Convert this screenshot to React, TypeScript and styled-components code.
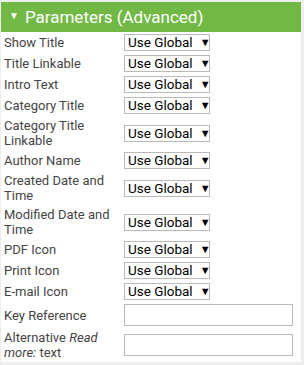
import styled, { createGlobalStyle } from "styled-components";

const GlobalStyle = createGlobalStyle`
  html, body {
    margin: 0;
    padding: 0;
    background: #eeeeee;
  }
  body {
    font-family: Roboto, "Liberation Sans", sans-serif;
  }
`;

const Page = styled.div`
  padding: 2px 3px 2px 1px;
  width: 304px;
  height: 365px;
  box-sizing: border-box;
`;

const Panel = styled.div`
  background: #fff;
`;

const Header = styled.div`
  display: flex;
  align-items: center;
  gap: 6px;
  height: 30px;
  padding-left: 8px;
  background: #71b844;
  color: #fff;
  font-size: 17px;
  line-height: 30px;
`;

const Caret = styled.span`
  font-size: 10px;
  line-height: 1;
  margin-top: -3px;
`;

const Table = styled.table`
  width: 100%;
  border-collapse: collapse;
  font-size: 13px;
  line-height: 15px;
`;

const Label = styled.td`
  width: 112px;
  padding: 2px 4px 2px 3px;
  color: #454545;
  vertical-align: middle;
`;

const Field = styled.td`
  padding: 2px 8px 2px 4px;
  vertical-align: middle;
`;

const SelectBox = styled.div`
  display: flex;
  align-items: center;
  gap: 7px;
  box-sizing: border-box;
  width: 86px;
  height: 17px;
  padding: 0 0 0 3px;
  border: 1px solid #b9b9b9;
  color: #000;
  font-size: 13.5px;
  line-height: 15px;
  white-space: nowrap;
  overflow: hidden;
`;

const Arrow = styled.span`
  font-size: 11px;
`;

const TextInput = styled.input`
  display: block;
  box-sizing: border-box;
  width: 169px;
  height: 22px;
  margin: 0;
  border: 1px solid #b9b9b9;
  outline: none;
`;

const selectRows = [
  "Show Title",
  "Title Linkable",
  "Intro Text",
  "Category Title",
  "Category Title Linkable",
  "Author Name",
  "Created Date and Time",
  "Modified Date and Time",
  "PDF Icon",
  "Print Icon",
  "E-mail Icon",
];

export default function App() {
  return (
    <>
      <GlobalStyle />
      <Page>
        <Panel>
          <Header>
            <Caret>▼</Caret>
            Parameters (Advanced)
          </Header>
          <Table>
            <tbody>
              {selectRows.map((label) => (
                <tr key={label}>
                  <Label>{label}</Label>
                  <Field>
                    <SelectBox>
                      <span>Use Global</span>
                      <Arrow>▼</Arrow>
                    </SelectBox>
                  </Field>
                </tr>
              ))}
              <tr>
                <Label>Key Reference</Label>
                <Field>
                  <TextInput type="text" />
                </Field>
              </tr>
              <tr>
                <Label>
                  Alternative <i>Read</i> <i>more:</i> text
                </Label>
                <Field>
                  <TextInput type="text" />
                </Field>
              </tr>
            </tbody>
          </Table>
        </Panel>
      </Page>
    </>
  );
}
